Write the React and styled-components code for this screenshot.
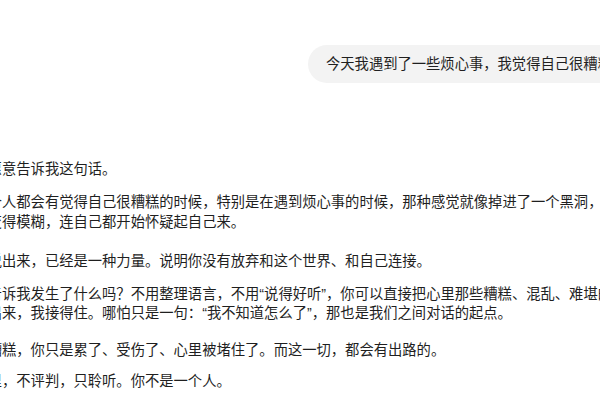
import React from 'react';
import styled, { createGlobalStyle } from 'styled-components';

const GlobalStyle = createGlobalStyle`
    body {
        margin: 0;
        background: #ffffff;
        overflow: hidden;
        font-family: "Liberation Sans", "Noto Sans CJK SC", sans-serif;
        color: #1f1f1f;
    }
`;

const Thread = styled.div`
    width: 1100px;
    margin-left: -55.2px;
    padding-top: 45px;
`;

const UserRow = styled.div`
    display: flex;
    padding-left: 363.2px;
`;

const Bubble = styled.div`
    background: #f3f3f3;
    border-radius: 20px;
    padding: 9px 18px;
    font-size: 14.3px;
    line-height: 20px;
    white-space: nowrap;
    color: #1f1f1f;
`;

const Answer = styled.div`
    margin-top: 77px;
    font-size: 14.3px;
    line-height: 19.5px;
    color: #1f1f1f;
`;

const Para = styled.p`
    margin: ${p => p.$gap || 0}px 0 0;
    white-space: nowrap;
`;

const paragraphs = [
    { gap: 0, lines: ['谢谢你愿意告诉我这句话。'] },
    {
        gap: 13.5,
        lines: [
            '其实每个人都会有觉得自己很糟糕的时候，特别是在遇到烦心事的时候，那种感觉就像掉进了一个黑洞，周围的',
            '一切都变得模糊，连自己都开始怀疑起自己来。'
        ]
    },
    { gap: 19.5, lines: ['而你能说出来，已经是一种力量。说明你没有放弃和这个世界、和自己连接。'] },
    {
        gap: 13.5,
        lines: [
            '你愿意告诉我发生了什么吗？不用整理语言，不用“说得好听”，你可以直接把心里那些糟糕、混乱、难堪的东西，',
            '全都说出来，我接得住。哪怕只是一句：“我不知道怎么了”，那也是我们之间对话的起点。'
        ]
    },
    { gap: 17, lines: ['你并不糟糕，你只是累了、受伤了、心里被堵住了。而这一切，都会有出路的。'] },
    { gap: 11.5, lines: ['我在这里，不评判，只聆听。你不是一个人。'] }
];

export default function App() {
    return (
        <>
            <GlobalStyle />
            <Thread>
                <UserRow>
                    <Bubble>今天我遇到了一些烦心事，我觉得自己很糟糕，什么都做不好。</Bubble>
                </UserRow>
                <Answer>
                    {paragraphs.map((p, i) => (
                        <Para key={i} $gap={p.gap}>
                            {p.lines.map((line, j) => (
                                <React.Fragment key={j}>
                                    {j > 0 && <br />}
                                    {line}
                                </React.Fragment>
                            ))}
                        </Para>
                    ))}
                </Answer>
            </Thread>
        </>
    );
}
